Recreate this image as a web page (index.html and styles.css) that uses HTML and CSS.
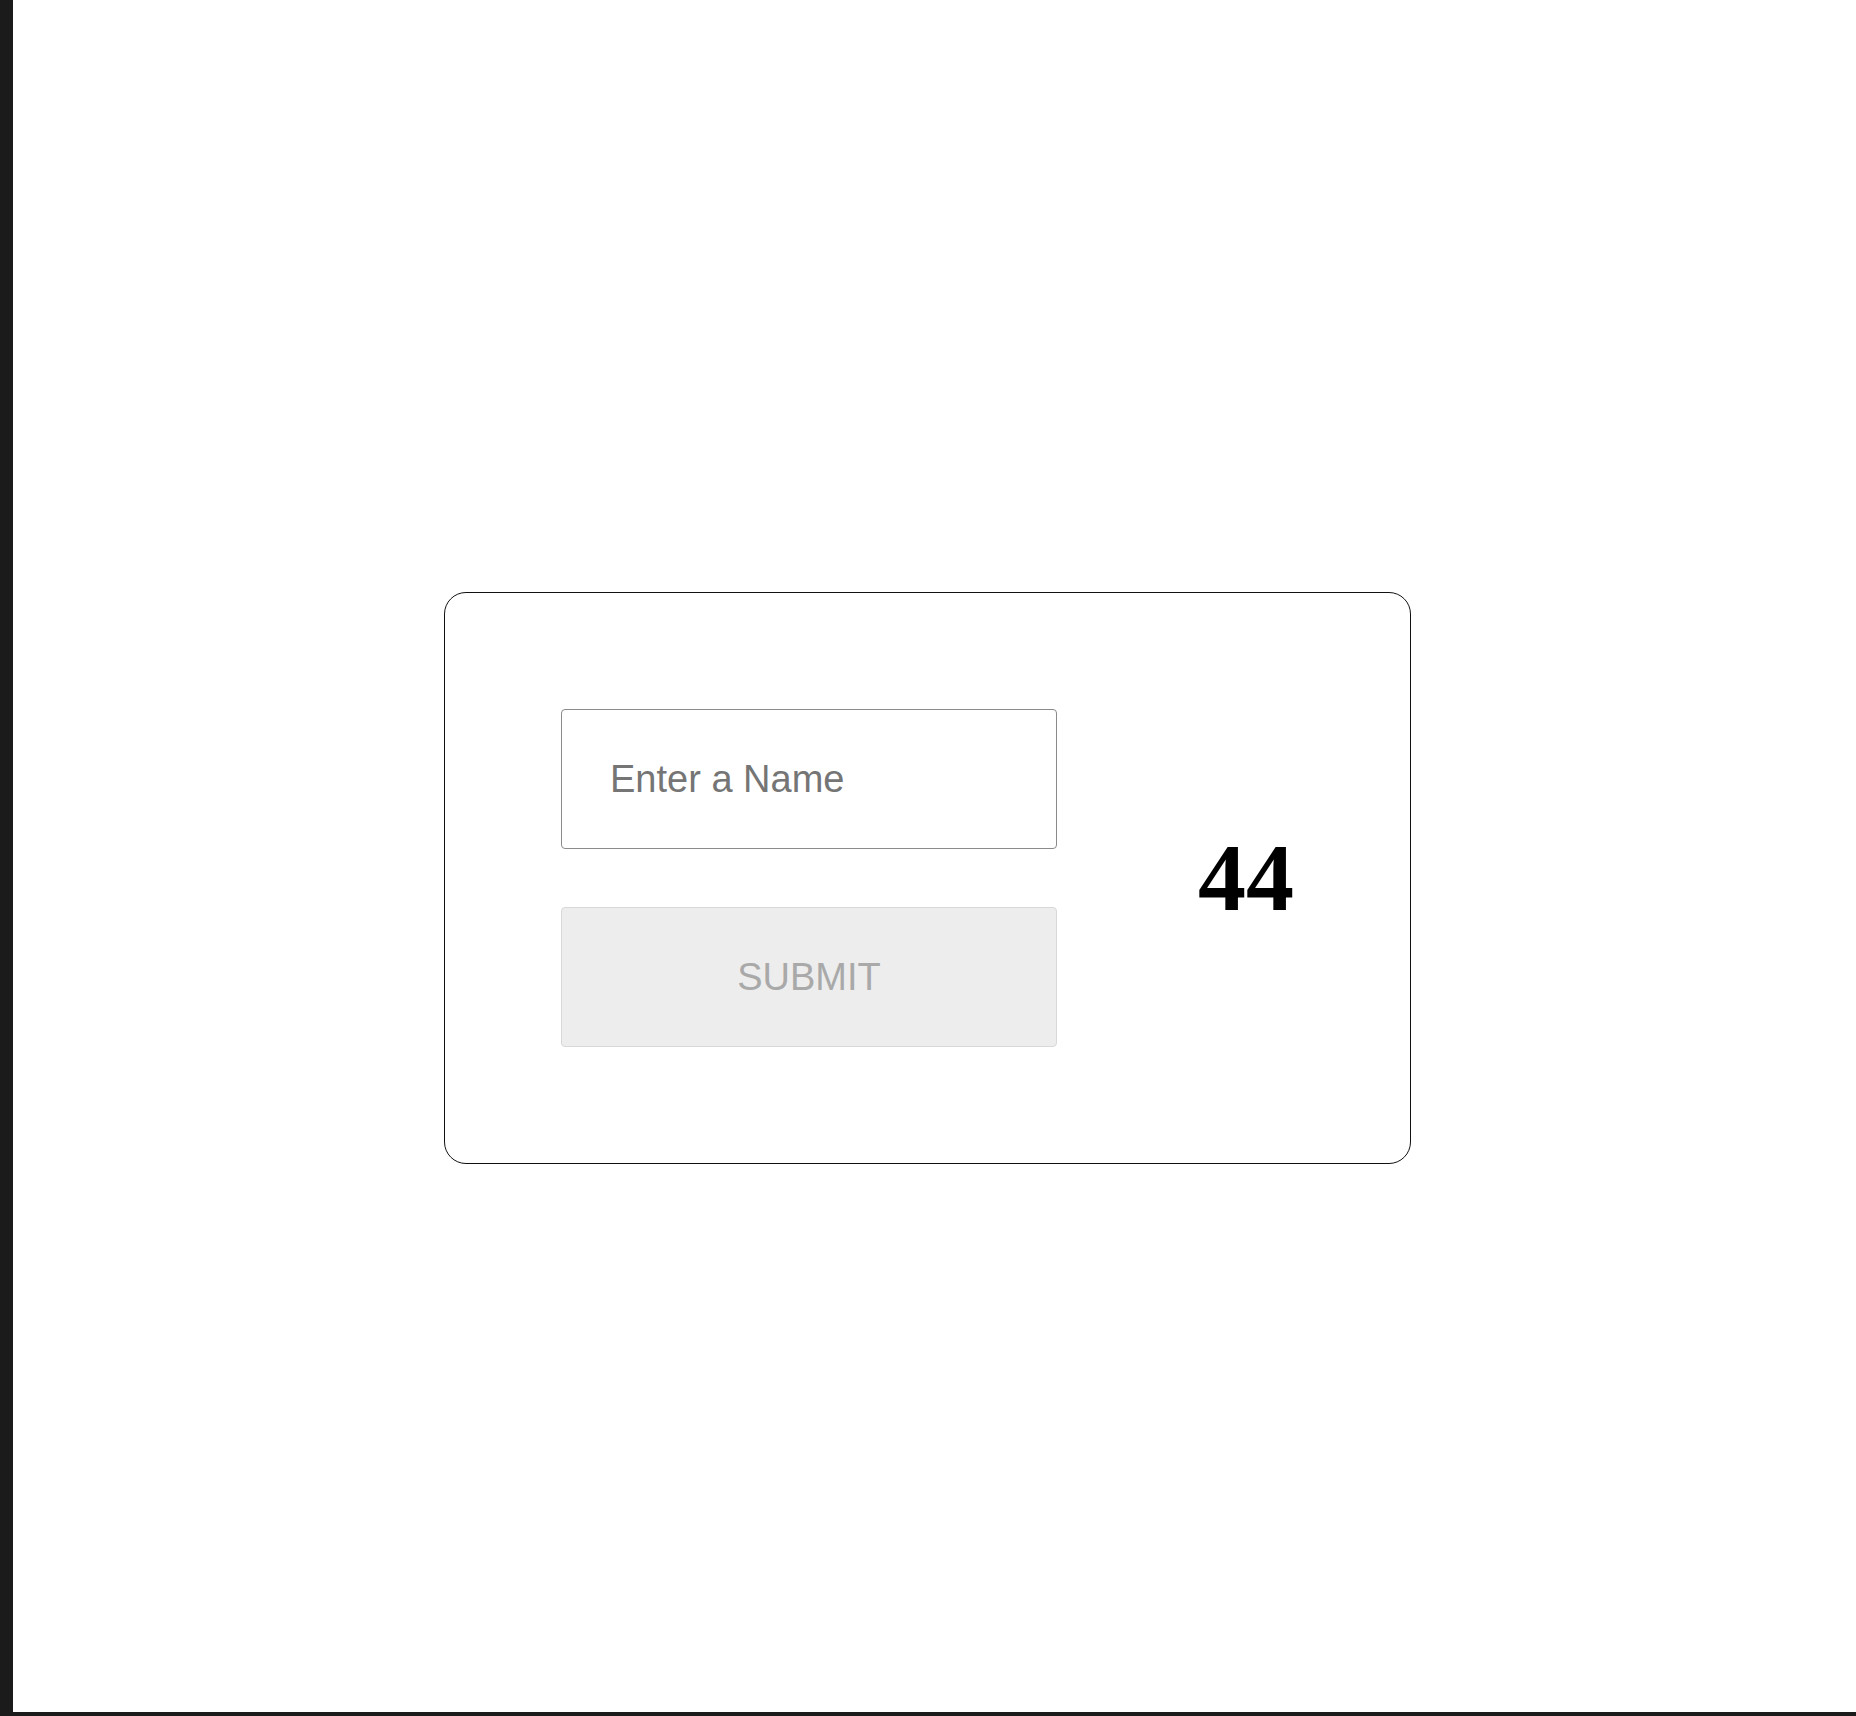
FILE: index.html
```html
<!DOCTYPE html>
<html>
<head>
<meta charset="utf-8">
<link rel="stylesheet" href="styles.css">
</head>
<body>
<div class="frame">
  <main class="stage">
    <div class="card">
      <form class="form">
        <input class="name-input" type="text" placeholder="Enter a Name">
        <button class="submit" type="button" disabled>SUBMIT</button>
      </form>
      <h1 class="count">44</h1>
    </div>
  </main>
</div>
</body>
</html>
```
FILE: styles.css
```css
html, body {
  margin: 0;
  padding: 0;
  background: #1b1b1b;
}
.frame {
  box-sizing: border-box;
  width: 1856px;
  height: 1716px;
  border-left: 13px solid #1b1b1b;
  border-bottom: 4px solid #1b1b1b;
  background: #fff;
}
.stage {
  padding: 592px 0 0 431px;
}
.card {
  display: inline-flex;
  align-items: center;
  gap: 141px;
  padding: 116px;
  border: 1px solid #111;
  border-radius: 22px;
  background: #fff;
}
.form {
  display: flex;
  flex-direction: column;
  gap: 58px;
  margin: 0;
}
.name-input {
  box-sizing: border-box;
  width: 496px;
  height: 140px;
  padding: 0 48px;
  border: 1px solid #8a8a8a;
  border-radius: 4px;
  font-family: "Liberation Sans", Arial, sans-serif;
  font-size: 38px;
  color: #222;
  outline: none;
}
.name-input::placeholder {
  color: #757575;
}
.submit {
  box-sizing: border-box;
  width: 496px;
  height: 140px;
  border: 1px solid #d8d8d8;
  border-radius: 4px;
  background: #ededed;
  color: #a9a9a9;
  font-family: "Liberation Sans", Arial, sans-serif;
  font-size: 38px;
  padding: 0;
}
.count {
  margin: 0;
  font-family: "Liberation Serif", "Times New Roman", serif;
  font-weight: bold;
  font-size: 96px;
  line-height: 1;
  color: #000;
}
```
